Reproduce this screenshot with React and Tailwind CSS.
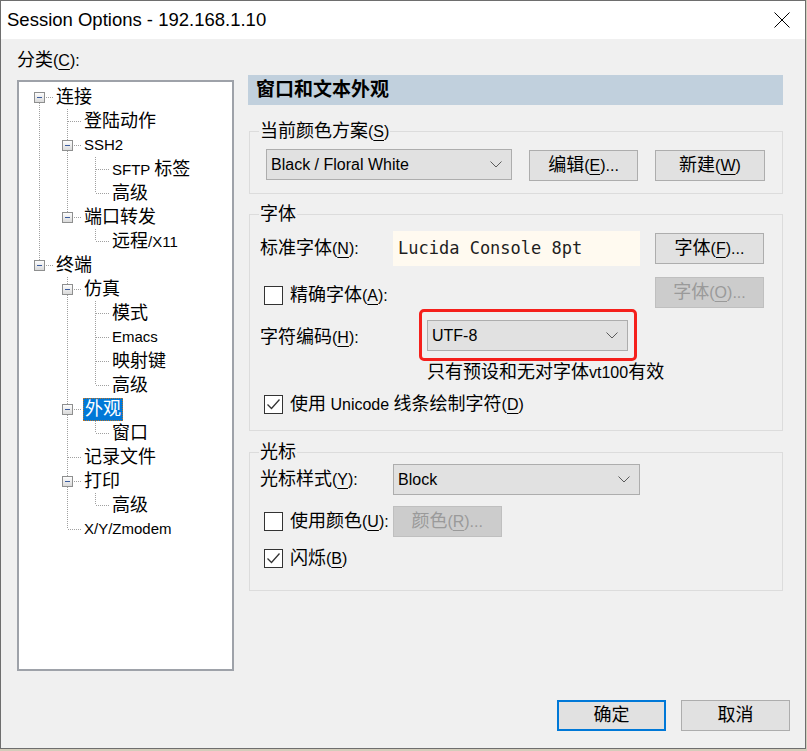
import React from "react";

const isCJK = (ch) => /[\u2E80-\u9FFF\u3000-\u303F\uFF00-\uFFEF]/.test(ch);

function T({ s, lat = "text-[16px]" }) {
  const parts = [];
  let cur = null;
  for (let i = 0; i < s.length; i++) {
    let ch = s[i];
    let u = false;
    if (ch === "&") {
      u = true;
      i++;
      ch = s[i];
    }
    const c = isCJK(ch);
    if (u) {
      parts.push({ t: ch, c, u: true });
      cur = null;
    } else if (cur && cur.c === c) {
      cur.t += ch;
    } else {
      cur = { t: ch, c, u: false };
      parts.push(cur);
    }
  }
  return (
    <>
      {parts.map((p, k) => (
        <span
          key={k}
          className={
            (p.c ? "text-[18px]" : lat) +
            (p.u ? " underline underline-offset-[3px] decoration-1" : "")
          }
        >
          {p.t}
        </span>
      ))}
    </>
  );
}

const DOT = "#a0a0a0";

function Anc({ line }) {
  return (
    <svg width="28" height="24" className="shrink-0 block">
      {line ? (
        <line x1="14.5" y1="0" x2="14.5" y2="24" stroke={DOT} strokeDasharray="1 1" />
      ) : null}
    </svg>
  );
}

function Conn({ up, down, box }) {
  return (
    <svg width="28" height="24" className="shrink-0 block">
      <defs>
        <linearGradient id="eg" x1="0" y1="0" x2="0" y2="1">
          <stop offset="0" stopColor="#ffffff" />
          <stop offset="1" stopColor="#d8d8d8" />
        </linearGradient>
      </defs>
      {up ? <line x1="14.5" y1="0" x2="14.5" y2="12" stroke={DOT} strokeDasharray="1 1" /> : null}
      {down ? <line x1="14.5" y1="12" x2="14.5" y2="24" stroke={DOT} strokeDasharray="1 1" /> : null}
      <line x1="15" y1="12.5" x2="28" y2="12.5" stroke={DOT} strokeDasharray="1 1" />
      {box ? (
        <g>
          <rect x="9.5" y="7.5" width="10" height="10" fill="url(#eg)" stroke="#8e8f8f" />
          <line x1="12" y1="12.5" x2="17" y2="12.5" stroke="#3b5c9e" strokeWidth="1" />
        </g>
      ) : null}
    </svg>
  );
}

const rows = [
  { a: [], up: false, down: true, box: true, t: "连接" },
  { a: [1], up: true, down: true, t: "登陆动作" },
  { a: [1], up: true, down: true, box: true, t: "SSH2" },
  { a: [1, 1], up: true, down: true, t: "SFTP 标签" },
  { a: [1, 1], up: true, down: false, t: "高级" },
  { a: [1], up: true, down: false, box: true, t: "端口转发" },
  { a: [1, 0], up: true, down: false, t: "远程/X11" },
  { a: [], up: true, down: false, box: true, t: "终端" },
  { a: [0], up: true, down: true, box: true, t: "仿真" },
  { a: [0, 1], up: true, down: true, t: "模式" },
  { a: [0, 1], up: true, down: true, t: "Emacs" },
  { a: [0, 1], up: true, down: true, t: "映射键" },
  { a: [0, 1], up: true, down: false, t: "高级" },
  { a: [0], up: true, down: true, box: true, t: "外观", sel: true },
  { a: [0, 1], up: true, down: false, t: "窗口" },
  { a: [0], up: true, down: true, t: "记录文件" },
  { a: [0], up: true, down: true, box: true, t: "打印" },
  { a: [0, 1], up: true, down: false, t: "高级" },
  { a: [0], up: true, down: false, t: "X/Y/Zmodem" },
];

function Chevron() {
  return (
    <svg width="12" height="7" viewBox="0 0 12 7" className="block">
      <path d="M0.5 0.5 L6 6 L11.5 0.5" fill="none" stroke="#5a5a5a" strokeWidth="1" />
    </svg>
  );
}

function Combo({ text, w }) {
  return (
    <div
      className={
        "flex h-[31px] items-center justify-between border border-[#adadad] bg-[#e1e1e1] pl-[4px] pr-[9px] leading-[22px] " +
        w
      }
    >
      <span>
        <T s={text} />
      </span>
      <Chevron />
    </div>
  );
}

function Btn({ s, w, disabled, focus }) {
  return (
    <div
      className={
        "flex h-[31px] items-center justify-center leading-[22px] " +
        w +
        (disabled
          ? " border border-[#bfbfbf] bg-[#cccccc] text-[#9a9a9a]"
          : focus
          ? " border-2 border-[#0078d7] bg-[#e1e1e1]"
          : " border border-[#adadad] bg-[#e1e1e1]")
      }
    >
      <span>
        <T s={s} />
      </span>
    </div>
  );
}

function Check({ checked }) {
  return (
    <div className="h-[19px] w-[19px] shrink-0 border border-[#333333] bg-white">
      {checked ? (
        <svg width="17" height="17" viewBox="0 0 17 17" className="block">
          <path d="M2.5 8.5 L6.5 12.5 L14.5 3.5" fill="none" stroke="#333333" strokeWidth="1.3" />
        </svg>
      ) : null}
    </div>
  );
}

function CheckRow({ checked, s, className = "" }) {
  return (
    <div className={"flex h-[22px] items-center leading-[22px] " + className}>
      <Check checked={checked} />
      <span className="ml-[7px]">
        <T s={s} />
      </span>
    </div>
  );
}

function Legend({ s }) {
  return (
    <legend className="ml-[9px] h-[22px] px-[1px] leading-[22px]">
      <T s={s} />
    </legend>
  );
}

export default function App() {
  return (
    <div className="h-[751px] w-[807px] bg-[#d3cdbb] font-['Liberation_Sans','Noto_Sans_CJK_SC',sans-serif] text-black">
      <div className="flex h-[749px] w-[806px] flex-col border border-[#6e6e6e] bg-[#f0f0f0]">
        {/* title bar */}
        <div className="flex h-[38px] shrink-0 items-center justify-between bg-white pl-[6px]">
          <span className="text-[18.5px] leading-[24px]">Session Options - 192.168.1.10</span>
          <svg width="16" height="16" viewBox="0 0 16 16" className="mr-[15px] block">
            <path d="M0.5 0.5 L15.5 15.5 M15.5 0.5 L0.5 15.5" stroke="#000" strokeWidth="1" />
          </svg>
        </div>

        {/* body */}
        <div className="flex flex-1 flex-col">
          <div className="flex">
            {/* left column */}
            <div className="flex w-[233px] flex-col pl-[16px]">
              <div className="mt-[10px] h-[22px] leading-[22px]">
                <T s="分类(&C):" />
              </div>
              <div className="mt-[9px] h-[591px] w-[217px] border-2 border-[#9ea2a9] bg-white pl-[6px] pt-[3px]">
                {rows.map((r, i) => (
                  <div key={i} className="flex h-[24px] items-center">
                    {r.a.map((l, j) => (
                      <Anc key={j} line={l} />
                    ))}
                    <Conn up={r.up} down={r.down} box={r.box} />
                    {r.sel ? (
                      <span className="ml-[2px] border border-dotted border-[#b8742c] bg-[#0078d7] px-[1px] leading-[21px] text-white">
                        <T s={r.t} lat="text-[15px]" />
                      </span>
                    ) : (
                      <span className="ml-[3px] leading-[22px]">
                        <T s={r.t} lat="text-[15px]" />
                      </span>
                    )}
                  </div>
                ))}
              </div>
            </div>

            {/* right column */}
            <div className="ml-[14px] flex w-[535px] flex-col">
              <div className="mt-[36px] flex h-[30px] items-center bg-[#c1d0dd] pl-[8px]">
                <span className="text-[19px] font-bold leading-[24px]">窗口和文本外观</span>
              </div>

              {/* group 1 */}
              <fieldset className="ml-[1px] mt-[15px] w-[534px] border border-[#dcdcdc]">
                <Legend s="当前颜色方案(&S)" />
                <div className="flex items-start pb-[12px] pl-[16px] pt-[7px]">
                  <Combo text="Black / Floral White" w="w-[246px]" />
                  <div className="ml-[17px] mt-[1px]">
                    <Btn s="编辑(&E)..." w="w-[109px]" />
                  </div>
                  <div className="ml-[17px] mt-[1px]">
                    <Btn s="新建(&W)" w="w-[110px]" />
                  </div>
                </div>
              </fieldset>

              {/* group 2 */}
              <fieldset className="ml-[1px] mt-[9px] w-[534px] border border-[#dcdcdc]">
                <Legend s="字体" />
                <div className="flex flex-col pb-[15px] pl-[10px] pr-[18px] pt-[6px]">
                  <div className="flex h-[35px] items-center">
                    <div className="w-[133px] leading-[22px]">
                      <T s="标准字体(&N):" />
                    </div>
                    <div className="flex h-[35px] w-[247px] items-center bg-[#fffaf0] pl-[5px] font-['DejaVu_Sans_Mono',monospace] text-[17px] text-[#1e1e1e]">
                      Lucida Console 8pt
                    </div>
                    <div className="ml-[15px]">
                      <Btn s="字体(&F)..." w="w-[109px]" />
                    </div>
                  </div>
                  <div className="mt-[11px] flex h-[31px] items-center justify-between">
                    <CheckRow checked={false} s="精确字体(&A):" className="ml-[4px] mt-[6px]" />
                    <Btn s="字体(&O)..." w="w-[109px]" disabled />
                  </div>
                  <div className="mt-[1px] flex items-center">
                    <div className="mt-[5px] w-[159px] leading-[22px]">
                      <T s="字符编码(&H):" />
                    </div>
                    <div className="rounded-[5px] border-[3px] border-[#f5201c] pb-[7px] pl-[5px] pr-[6px] pt-[8px]">
                      <Combo text="UTF-8" w="w-[201px]" />
                    </div>
                  </div>
                  <div className="ml-[167px] mt-[1px] h-[20px] leading-[20px]">
                    <T s="只有预设和无对字体vt100有效" />
                  </div>
                  <CheckRow checked s="使用 Unicode 线条绘制字符(&D)" className="ml-[4px] mt-[11px]" />
                </div>
              </fieldset>

              {/* group 3 */}
              <fieldset className="ml-[1px] mt-[10px] w-[534px] border border-[#dcdcdc]">
                <Legend s="光标" />
                <div className="flex flex-col pb-[21px] pl-[10px] pt-[1px]">
                  <div className="flex h-[31px] items-center">
                    <div className="w-[133px] leading-[22px]">
                      <T s="光标样式(&Y):" />
                    </div>
                    <Combo text="Block" w="w-[247px]" />
                  </div>
                  <div className="mt-[11px] flex h-[31px] items-center">
                    <CheckRow checked={false} s="使用颜色(&U):" className="ml-[4px]" />
                    <div className="ml-[4px]">
                      <Btn s="颜色(&R)..." w="w-[109px]" disabled />
                    </div>
                  </div>
                  <CheckRow checked s="闪烁(&B)" className="ml-[4px] mt-[10px]" />
                </div>
              </fieldset>
            </div>
          </div>

          {/* bottom buttons */}
          <div className="mt-[29px] flex justify-end gap-[15px] pr-[15px]">
            <Btn s="确定" w="w-[109px]" focus />
            <Btn s="取消" w="w-[109px]" />
          </div>
        </div>
      </div>
    </div>
  );
}
